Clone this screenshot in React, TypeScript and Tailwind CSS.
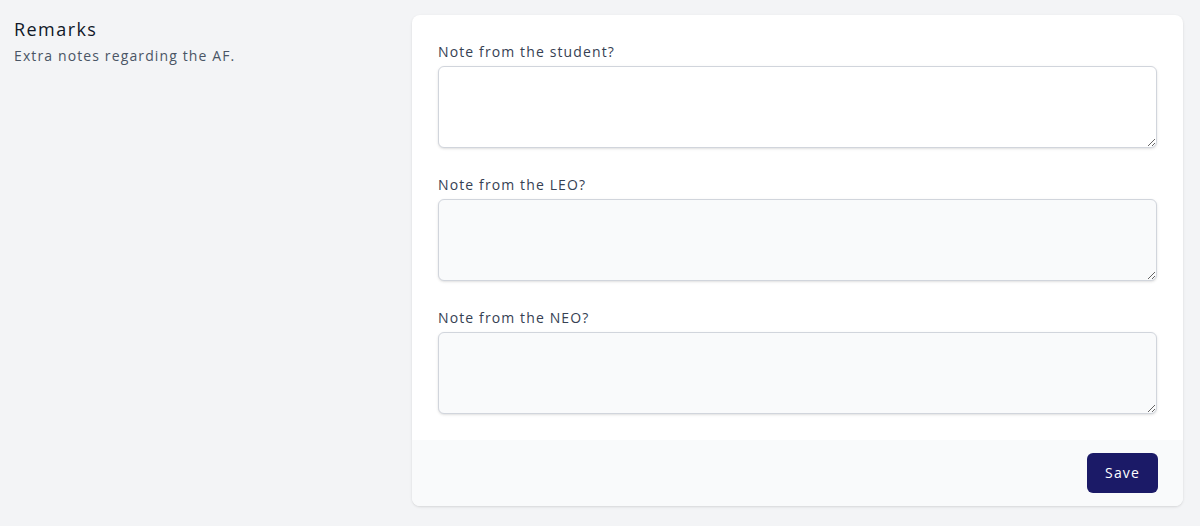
import { useState } from "react";

const fields = [
  { id: "student", label: "Note from the student?", disabled: false },
  { id: "leo", label: "Note from the LEO?", disabled: true },
  { id: "neo", label: "Note from the NEO?", disabled: true },
];

export default function App() {
  const [notes, setNotes] = useState<Record<string, string>>({
    student: "",
    leo: "",
    neo: "",
  });

  return (
    <div
      className="min-h-screen bg-[#f3f4f6] flex items-start pt-[15px] pl-[14px] tracking-[0.07em]"
      style={{ fontFamily: '"Open Sans", "Noto Sans", sans-serif' }}
    >
      {/* Intro */}
      <div className="w-[398px] shrink-0">
        <h3 className="text-lg leading-6 font-normal text-gray-900 mt-[2px] tracking-[0.08em]">Remarks</h3>
        <p className="mt-[5px] text-sm leading-5 text-gray-600">Extra notes regarding the AF.</p>
      </div>

      {/* Form card */}
      <form
        className="w-[771px] bg-white rounded-lg shadow overflow-hidden"
        onSubmit={(e) => e.preventDefault()}
      >
        <div className="px-[26px] pt-[27px] pb-[26px] flex flex-col gap-[27px]">
          {fields.map((f) => (
            <div key={f.id}>
              <label htmlFor={f.id} className="block text-sm leading-5 text-gray-700">
                {f.label}
              </label>
              <textarea
                id={f.id}
                disabled={f.disabled}
                value={notes[f.id]}
                onChange={(e) => setNotes({ ...notes, [f.id]: e.target.value })}
                className={
                  "mt-1 block w-full h-[82px] rounded-md border border-gray-300 shadow-sm px-3 py-2 text-sm focus:outline-none " +
                  (f.disabled ? "bg-gray-50" : "bg-white")
                }
              />
            </div>
          ))}
        </div>
        <div className="bg-gray-50 px-[25px] py-[13px] flex justify-end">
          <button
            type="submit"
            className="h-10 w-[71px] rounded-md bg-[#1b1a67] text-sm text-white"
          >
            Save
          </button>
        </div>
      </form>
    </div>
  );
}
